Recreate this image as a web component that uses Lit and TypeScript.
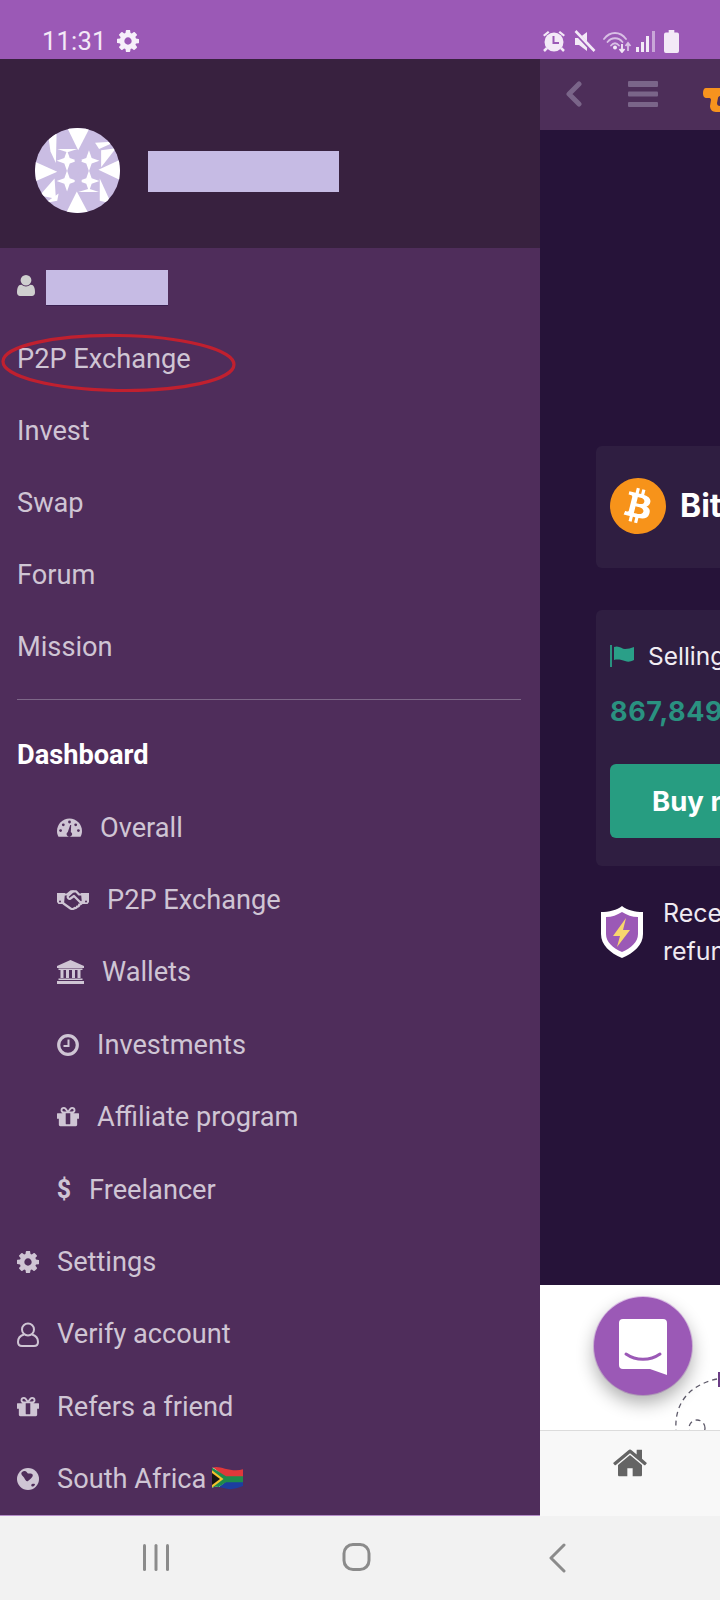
import { LitElement, html, css, svg } from "lit";
import { customElement } from "lit/decorators.js";

const FA = {
  cog: "M1152 896q0-106-75-181t-181-75-181 75-75 181 75 181 181 75 181-75 75-181zm512-109v222q0 12-8 23t-20 13l-185 28q-19 54-39 91 35 50 107 138 10 12 10 25t-9 23q-27 37-99 108t-94 71q-12 0-26-9l-138-108q-44 23-91 38-16 136-29 186-7 28-36 28h-222q-14 0-24.5-8.5t-11.5-21.5l-28-184q-49-16-90-37l-141 107q-10 9-25 9-14 0-25-11-126-114-165-168-7-10-7-23 0-12 8-23 15-21 51-66.5t54-70.5q-27-50-41-99l-183-27q-13-2-21-12.5t-8-23.5v-222q0-12 8-23t19-13l186-28q14-46 39-92-40-57-107-138-10-12-10-24 0-10 9-23 26-36 98.5-107.5t94.5-71.5q13 0 26 10l138 107q44-23 91-38 16-136 29-186 7-28 36-28h222q14 0 24.5 8.5t11.5 21.5l28 184q49 16 90 37l142-107q9-9 24-9 13 0 25 10 129 119 165 170 7 8 7 22 0 12-8 23-15 21-51 66.5t-54 70.5q26 50 41 98l183 28q13 2 21 12.5t8 23.5z",
  user: "M1536 1399q0 109-62.5 187t-150.5 78h-854q-88 0-150.5-78t-62.5-187q0-85 8.5-160.5t31.5-152 58.5-131 94-89 134.5-34.5q131 128 313 128t313-128q76 0 134.5 34.5t94 89 58.5 131 31.5 152 8.5 160.5zm-256-887q0 159-112.5 271.5t-271.5 112.5-271.5-112.5-112.5-271.5 112.5-271.5 271.5-112.5 271.5 112.5 112.5 271.5z",
  gift: "M1056 1356v-716h-320v716q0 25 18 38.5t46 13.5h192q28 0 46-13.5t18-38.5zm-456-844h195l-126-161q-26-31-69-31-40 0-68 28t-28 68 28 68 68 28zm688-96q0-40-28-68t-68-28q-43 0-69 31l-125 161h194q40 0 68-28t28-68zm376 256v320q0 14-9 23t-23 9h-96v416q0 40-28 68t-68 28h-1088q-40 0-68-28t-28-68v-416h-96q-14 0-23-9t-9-23v-320q0-14 9-23t23-9h440q-93 0-158.5-65.5t-65.5-158.5 65.5-158.5 158.5-65.5q107 0 168 77l128 165 128-165q61-77 168-77 93 0 158.5 65.5t65.5 158.5-65.5 158.5-158.5 65.5h440q14 0 23 9t9 23z",
  home: "M1472 992v480q0 26-19 45t-45 19h-384v-384h-256v384h-384q-26 0-45-19t-19-45v-480q0-1 .5-3t.5-3l575-474 575 474q1 2 1 6zm223-69l-62 74q-8 9-21 11h-3q-13 0-21-7l-692-577-692 577q-12 8-24 7-13-2-21-11l-62-74q-8-10-7-23.5t11-21.5l719-599q32-26 76-26t76 26l244 204v-195q0-14 9-23t23-9h192q14 0 23 9t9 23v408l219 182q10 8 11 21.5t-7 23.5z",
};

const fa = (d: string, cls: string) =>
  html`<svg class=${cls} viewBox="128 128 1536 1536"><path d=${d} fill="currentColor"></path></svg>`;

const gauge = html`<svg class="i i-gauge" viewBox="0 0 25 19">
  <path fill="currentColor" d="M12.5 0.5C5.6 0.5 0 6.1 0 13c0 2 .4 3.6 1.2 5.2.2.4.6.6 1 .6h20.6c.4 0 .8-.2 1-.6.8-1.6 1.2-3.2 1.2-5.2C25 6.1 19.4.5 12.5.5z"></path>
  <g fill="#4f2d5b">
    <circle cx="12.5" cy="4" r="1.4"></circle><circle cx="6.3" cy="6.8" r="1.4"></circle>
    <circle cx="3.6" cy="12.6" r="1.4"></circle><circle cx="21.4" cy="12.6" r="1.4"></circle>
    <circle cx="18.7" cy="6.8" r="1.4"></circle>
    <path d="M13.2 7l1-.1-.4 7.1a2.6 2.6 0 1 1-3 .1z"></path>
  </g>
</svg>`;

const hand = html`<svg class="i i-hand" viewBox="0 0 32 20">
  <g fill="currentColor">
    <path d="M0 3h8l-1 11H1.500L0 12zM24 3h8v9l-1.500 2H25z"></path>
  </g>
  <g fill="#4f2d5b"><circle cx="3" cy="11.500" r="1"></circle><circle cx="29" cy="11.500" r="1"></circle></g>
  <g fill="none" stroke="currentColor" stroke-width="2.200" stroke-linejoin="round" stroke-linecap="round">
    <path d="M7 4.500h3l4-3.200h5l3 3.200h3"></path>
    <path d="M16 1.500l-5 4.500c-1 1.500 1 3.500 2.500 2.500l3.500-2.500 7.500 7.500"></path>
    <path d="M6.500 13.500l7 5c1.500 1 3.500 .5 4-.5 1.200 .5 2.500-.3 2.500-1.500 1.200 .3 2.500-.7 2.200-2 1.200 .2 2.500-1 1.800-2.500"></path>
  </g>
</svg>`;

const bank = html`<svg class="i i-bank" viewBox="0 0 27 24" fill="currentColor">
  <path d="M13.500 0L27 6v2H0V6z"></path>
  <path d="M1.500 8.500h24v1.500h-24zM3.500 10h3v8h-3zM9 10h3v8H9zM15 10h3v8h-3zM20.500 10h3v8h-3zM1.500 18.500h24V20h-24zM0 21h27v3H0z"></path>
</svg>`;

const clock = html`<svg class="i i-clock" viewBox="0 0 22 22">
  <circle cx="11" cy="11" r="9.300" fill="none" stroke="currentColor" stroke-width="3.200"></circle>
  <path d="M11.500 5.500v6.500H6.500" fill="none" stroke="currentColor" stroke-width="2"></path>
</svg>`;

const userOutline = html`<svg class="i i-verify" viewBox="0 0 22 25" fill="none" stroke="currentColor" stroke-width="2">
  <circle cx="11" cy="7.500" r="6"></circle>
  <path d="M7 12.500C3.500 13.500 1 16 1 20c0 2.500 1.500 4 4 4h12c2.500 0 4-1.500 4-4 0-4-2.500-6.500-6-7.500"></path>
</svg>`;

const globe = html`<svg class="i i-top" viewBox="0 0 22 22">
  <circle cx="11" cy="11" r="11" fill="currentColor"></circle>
  <path fill="#4f2d5b" d="M5 4c2-1.500 4-1 5 .5s2 1 3.500 1 3 1 2 3-3 3-4.500 4.500-3-2-4-3.500S3 6 5 4zM15 16c1.500-.5 3-.5 3 .5s-2 2.500-3 2-1-2 0-2.500z"></path>
</svg>`;

const zaFlag = html`<svg class="flag" viewBox="0 0 31 22" preserveAspectRatio="none">
  <defs><clipPath id="zaf"><path d="M0 1C4-1 8 .5 13 1.500s12 2.500 18 .5v15.500c-6 2-11 3.500-16 2.500S4 17 0 19z"></path></clipPath></defs>
  <g clip-path="url(#zaf)">
    <rect width="31" height="11" fill="#e0383a"></rect>
    <rect y="11" width="31" height="11" fill="#1d3ea0"></rect>
    <path d="M-1-1l16 11.500h17v2H15L-1 24z" fill="#fff"></path>
    <path d="M-1 0l15 8.500h18v5.500H14L-1 23z" fill="#1f8a4c"></path>
    <path d="M0 3l11.500 8L0 19z" fill="#f4c02f"></path>
    <path d="M0 5.500l8 5.500-8 5.500z" fill="#141414"></path>
  </g>
</svg>`;

const star = (x: number, y: number) =>
  svg`<polygon points="${x},${y - 31} ${x + 8},${y - 8} ${x + 31},${y} ${x + 8},${y + 8} ${x},${y + 31} ${x - 8},${y + 8} ${x - 31},${y} ${x - 8},${y - 8}" fill="#fff"></polygon>`;

const avatar = html`<svg class="avatar" viewBox="0 0 252 252">
  <defs><clipPath id="av"><circle cx="126" cy="126" r="126"></circle></clipPath></defs>
  <g clip-path="url(#av)">
    <rect width="252" height="252" fill="#cabde3"></rect>
    <g fill="#fff">
      <polygon points="94,-4 164,-4 128,66"></polygon>
      <polygon points="-4,98 -4,160 66,130"></polygon>
      <polygon points="256,92 256,156 188,124"></polygon>
      <polygon points="90,256 160,256 124,188"></polygon>
      <polygon points="40,30 64,16 62,104 46,70"></polygon>
      <polygon points="178,44 240,40 190,62"></polygon>
      <polygon points="196,66 240,60 196,116"></polygon>
      <polygon points="14,200 58,150 62,210"></polygon>
      <polygon points="70,194 30,222 66,216"></polygon>
      <polygon points="192,150 226,224 192,216"></polygon>
      <polygon points="66,62 126,62 96,72"></polygon>
      <polygon points="128,190 190,190 160,180"></polygon>
    </g>
    ${star(95, 97)}${star(160, 97)}${star(95, 157)}${star(160, 157)}
    <polygon points="128,72 139,97 128,122 117,97" fill="#cabde3"></polygon>
    <polygon points="128,132 139,157 128,182 117,157" fill="#cabde3"></polygon>
  </g>
</svg>`;

const item = (icon: unknown, label: string, sub = true) => html`
  <div class=${sub ? "row sub" : "row top"}>${icon}<span>${label}</span></div>`;

@customElement("app-root")
export class AppRoot extends LitElement {
  static styles = css`
    :host { display: block; width: 720px; height: 1600px; font-family: Roboto, "Liberation Sans", sans-serif; overflow: hidden; background: #f2f2f2; }
    .page { display: flex; flex-direction: column; height: 1600px; }

    .status { height: 59px; flex: none; background: #9b59b6; color: #f3e9f7; display: flex; align-items: flex-start; box-sizing: border-box; padding: 27px 0 0 42px; }
    .time { font-size: 25.500px; line-height: 29px; letter-spacing: .2px; width: 75px; }
    .st-gear { width: 22px; height: 22px; margin-top: 3px; color: #f6effa; }
    .st-right { margin-left: auto; display: flex; align-items: flex-start; padding: 3px 41px 0 0; }
    .st-right svg { display: block; height: 23px; flex: none; }
    .m8 { margin-left: 8px; }
    .m7 { margin-left: 7px; }
    .m3 { margin-left: 3px; }

    .main { flex: 1; display: flex; min-height: 0; }
    .drawer { width: 540px; flex: none; background: #4f2d5b; display: flex; flex-direction: column; border-bottom: 1px solid #b48cc8; box-sizing: border-box; }
    .head { height: 189px; flex: none; background: #38213f; display: flex; align-items: center; padding: 36px 0 0 35px; box-sizing: border-box; gap: 28px; }
    .avatar { width: 85px; height: 85px; display: block; margin-top: -2px; }
    .name { width: 191px; height: 41px; background: #c6bbe4; }
    .list { flex: 1; padding-top: 3px; color: #cfc5d4; font-size: 27.200px; }
    .row { height: 72px; display: flex; align-items: center; padding-left: 17px; box-sizing: border-box; position: relative; white-space: nowrap; }
    .row.sub, .row.top, .row.dash { height: 72.400px; }
    .row.sub { padding-left: 57px; gap: 18px; }
    .row.top { gap: 18px; }
    .row.dash { font-weight: 700; color: #fff; }
    .row.me { gap: 11px; }
    .row.me svg { width: 18px; height: 21px; color: #cfcfcf; margin-top: -3px; }
    .block { width: 122px; height: 35px; background: #c6bbe4; box-shadow: 0 1px 0 #3a2050; }
    .oval { position: absolute; left: 1px; top: 9px; width: 235px; height: 60px; pointer-events: none; }
    .rule { height: 1px; background: #7d6788; margin: 16px 19px 19px 17px; }

    .i { display: block; flex: none; color: #cfc5d4; }
    .i-top { width: 22px; height: 22px; }
    .i-verify { width: 22px; height: 25px; }
    .i-gauge { width: 25px; height: 19px; }
    .i-hand { width: 32px; height: 20px; }
    .i-bank { width: 27px; height: 24px; }
    .i-clock { width: 22px; height: 22px; }
    .i-gift { width: 22px; height: 22px; }
    .dollar { width: 14px; font-size: 25px; font-weight: 700; line-height: 1; color: #cfc5d4; flex: none; display: flex; justify-content: center; }
    .flag { width: 31px; height: 24px; margin-left: -12px; display: block; flex: none; }

    .content { flex: 1; min-width: 0; overflow: hidden; display: flex; flex-direction: column; position: relative; }
    .topbar { height: 71px; flex: none; background: #4d2e59; display: flex; align-items: center; padding-left: 25px; box-sizing: border-box; }
    .topbar svg { flex: none; display: block; }
    .tb-back { width: 17px; height: 26px; margin-top: -1px; }
    .tb-menu { width: 30px; height: 26px; margin: -1px 0 0 46px; }
    .tb-logo { width: 30px; height: 24px; margin: 10px 0 0 45px; }
    .dark { height: 1155px; flex: none; background: #261339; padding: 316px 0 0 56px; box-sizing: border-box; width: 500px; }
    .card { width: 420px; background: #2f1e41; border-radius: 6px; box-sizing: border-box; }
    .coin-card { height: 122px; display: flex; align-items: flex-start; padding: 32px 0 0 14px; gap: 14px; }
    .coin { width: 56px; height: 56px; display: block; flex: none; }
    .coin-name { font: 700 32px/56px Inter, "Liberation Sans", sans-serif; color: #fff; }
    .sell-card { height: 256px; margin-top: 42px; padding: 32px 14px 0; display: flex; flex-direction: column; }
    .sell { display: flex; align-items: center; gap: 13px; font: 400 24.500px/28px Inter, "Liberation Sans", sans-serif; color: #f1edf3; white-space: nowrap; }
    .sell svg { width: 25px; height: 22px; flex: none; }
    .amount { font: 700 27px/32px Inter, "Liberation Sans", sans-serif; letter-spacing: .6px; color: #2a9180; margin-top: 26px; }
    .buy { margin-top: 36px; height: 74px; background: #279d81; border-radius: 6px; color: #fff; font: 700 27.500px/74px Inter, "Liberation Sans", sans-serif; padding-left: 42px; }
    .refund { display: flex; gap: 20px; margin: 28px 0 0 5px; width: 420px; color: #efeaf1; font: 400 25px/38px Inter, "Liberation Sans", sans-serif; }
    .refund svg { width: 42px; height: 52px; flex: none; margin-top: 12px; }

    .white { height: 145px; flex: none; background: #fff; position: relative; overflow: hidden; }
    .deco { position: absolute; left: 130px; top: 80px; width: 50px; height: 65px; }
    .tab { flex: 1; background: #f8f8f8; border-top: 1px solid #dcdcdc; box-sizing: border-box; padding: 16px 0 0 72px; }
    .tab svg { width: 36px; height: 32px; display: block; color: #646464; }
    .fab { position: absolute; left: 54px; top: 1238px; width: 98px; height: 98px; border-radius: 50%; background: #9b59b6; box-shadow: 0 8px 18px rgba(0,0,0,.32), 0 0 0 1px #e7c9f2; display: flex; align-items: center; justify-content: center; }
    .fab svg { width: 50px; height: 58px; display: block; margin-top: 2px; }

    .nav { height: 84px; flex: none; background: #f2f2f2; position: relative; display: flex; align-items: flex-start; padding-top: 27px; box-sizing: border-box; }
    .nav svg { display: block; height: 30px; flex: none; }
    .nav-bars { width: 32px; margin-left: 138px; }
    .nav-home { width: 30px; margin-left: 172px; }
    .nav-back { width: 20px; margin-left: 176px; }
  `;

  render() {
    return html`<div class="page">
      <div class="status">
        <div class="time">11:31</div>
        ${fa(FA.cog, "st-gear")}
        <div class="st-right">
          <svg width="24" viewBox="0 0 24 23" fill="#f3e9f7">
            <path d="M1 5l5-4 1.500 1.500-5 4zM23 5l-5-4-1.500 1.500 5 4z"></path>
            <circle cx="12" cy="12" r="9.500"></circle>
            <path d="M11.500 6v7h5.500" fill="none" stroke="#9b59b6" stroke-width="2"></path>
            <path d="M5 18l-3 3M19 18l3 3" stroke="#f3e9f7" stroke-width="2.500"></path>
          </svg>
          <svg width="22" viewBox="0 0 22 23" class="m8" fill="#f3e9f7">
            <path d="M1 8h4l8-6v19l-8-6H1z"></path>
            <path d="M1 2l19 20" stroke="#9b59b6" stroke-width="4"></path>
            <path d="M1.500 1l19 20" stroke="#f3e9f7" stroke-width="2.600"></path>
          </svg>
          <svg width="30" viewBox="0 0 30 23" class="m7" fill="none" stroke="#d9bfe5" stroke-width="1.800">
            <path d="M1 9c6-8 16-8 22 0M4.500 12c4-5 11-5 15 0M8 15.500c2.500-3 5.500-3 8 0" stroke-linecap="round"></path>
            <circle cx="12" cy="17.500" r="2" fill="#f3e9f7" stroke="none"></circle>
            <path d="M19 14v7M16.500 19l2.500 3 2.500-3" stroke="#f3e9f7"></path>
            <path d="M25 21v-7M22.500 16l2.500-3 2.500 3"></path>
          </svg>
          <svg width="20" viewBox="0 0 20 23" class="m3">
            <rect x="0" y="17" width="3" height="5" fill="#f3e9f7"></rect>
            <rect x="5" y="12" width="3" height="10" fill="#f3e9f7"></rect>
            <rect x="10" y="6" width="3" height="16" fill="#f3e9f7"></rect>
            <rect x="16" y="1" width="3" height="21" fill="#c9a6d8"></rect>
          </svg>
          <svg width="15" viewBox="0 0 16 23" class="m8" fill="#f3e9f7" preserveAspectRatio="none">
            <path d="M5 0h6v2.500h3a2 2 0 0 1 2 2V21a2 2 0 0 1-2 2H2a2 2 0 0 1-2-2V4.500a2 2 0 0 1 2-2h3z"></path>
          </svg>
        </div>
      </div>

      <div class="main">
        <div class="drawer">
          <div class="head">${avatar}<div class="name"></div></div>
          <div class="list">
            <div class="row me">
              <svg viewBox="256 128 1280 1536" preserveAspectRatio="none"><path d=${FA.user} fill="currentColor"></path></svg>
              <div class="block"></div>
            </div>
            <div class="row">
              <span>P2P Exchange</span>
              <svg class="oval" viewBox="0 0 235 60" fill="none">
                <ellipse cx="117.500" cy="31" rx="115.500" ry="27.500" stroke="#c0202f" stroke-width="3.200" transform="rotate(.8 117 30)"></ellipse>
              </svg>
            </div>
            <div class="row"><span>Invest</span></div>
            <div class="row"><span>Swap</span></div>
            <div class="row"><span>Forum</span></div>
            <div class="row"><span>Mission</span></div>
            <div class="rule"></div>
            <div class="row dash"><span>Dashboard</span></div>
            ${item(gauge, "Overall")}
            ${item(hand, "P2P Exchange")}
            ${item(bank, "Wallets")}
            ${item(clock, "Investments")}
            ${item(fa(FA.gift, "i i-gift"), "Affiliate program")}
            ${item(html`<span class="dollar">$</span>`, "Freelancer")}
            ${item(fa(FA.cog, "i i-top"), "Settings", false)}
            ${item(userOutline, "Verify account", false)}
            ${item(fa(FA.gift, "i i-top"), "Refers a friend", false)}
            <div class="row top">${globe}<span>South Africa</span>${zaFlag}</div>
          </div>
        </div>

        <div class="content">
          <div class="topbar">
            <svg class="tb-back" viewBox="0 0 17 26" fill="none" stroke="#7a6589" stroke-width="5" stroke-linecap="round" stroke-linejoin="round"><path d="M14 3L4 13l10 10"></path></svg>
            <svg class="tb-menu" viewBox="0 0 30 26" fill="#7a6589"><rect width="30" height="6" y="0" rx="1"></rect><rect width="30" height="5" y="10.500" rx="1"></rect><rect width="30" height="5" y="21" rx="1"></rect></svg>
            <svg class="tb-logo" viewBox="0 0 30 24" fill="#f7931e"><path d="M3 0h27v8H17c-1 0-2 1-2 2l-1 5c0 2 1 3 3 3h13v6H13c-4 0-6-3-6-6l1-6c0-1-.5-2-1.500-2H4C1 10 0 8 0 5s1-5 3-5z"></path></svg>
          </div>
          <div class="dark">
            <div class="card coin-card">
              <svg class="coin" viewBox="0 0 64 64">
                <path fill="#f7931a" d="M63.040 39.741c-4.274 17.143-21.638 27.575-38.783 23.301C7.120 58.768-3.313 41.404.962 24.262 5.234 7.117 22.597-3.317 39.737.957c17.144 4.274 27.576 21.640 23.302 38.784z"></path>
                <path fill="#fff" d="M46.110 27.441c.636-4.258-2.606-6.547-7.039-8.074l1.438-5.768-3.512-.875-1.400 5.616c-.922-.230-1.870-.447-2.812-.662l1.410-5.653-3.509-.875-1.439 5.766c-.764-.174-1.514-.346-2.242-.527l.004-.018-4.842-1.209-.934 3.750s2.605.597 2.550.634c1.422.355 1.680 1.296 1.636 2.042l-1.638 6.571c.098.025.225.061.365.117l-.370-.092-2.297 9.205c-.174.432-.615 1.080-1.609.834.035.051-2.552-.637-2.552-.637l-1.743 4.020 4.570 1.139c.850.213 1.683.436 2.502.646l-1.453 5.835 3.507.875 1.440-5.772c.957.260 1.887.500 2.797.726L27.504 50.800l3.511.875 1.453-5.823c5.987 1.133 10.490.676 12.383-4.738 1.527-4.360-.075-6.875-3.225-8.516 2.294-.531 4.022-2.040 4.483-5.157zM38.087 38.690c-1.086 4.360-8.426 2.004-10.807 1.412l1.928-7.729c2.380.594 10.011 1.770 8.880 6.317zm1.085-11.312c-.990 3.966-7.100 1.951-9.083 1.457l1.748-7.010c1.983.494 8.367 1.416 7.335 5.553z"></path>
              </svg>
              <div class="coin-name">Bitcoin</div>
            </div>
            <div class="card sell-card">
              <div class="sell">
                <svg viewBox="0 0 25 22"><rect x="0" y="0" width="2" height="22" fill="#2a9180"></rect><path d="M4 2c5-2 8 2 11 2s6-1 9-2v13c-4 2-6 2-9 1s-7-2-11-1z" fill="#2a9f88"></path></svg>
                <span>Selling price</span>
              </div>
              <div class="amount">867,849.00</div>
              <div class="buy">Buy now</div>
            </div>
            <div class="refund">
              <svg viewBox="0 0 42 52">
                <path fill="#fff" d="M21 0c5 4 13 6 21 6v22c0 11-9 19-21 24C9 47 0 39 0 28V6c8 0 16-2 21-6z"></path>
                <path fill="#9b59b6" d="M21 6c5 3 10 5 16 5v17c0 8-7 14-16 18-9-4-16-10-16-18V11c6 0 11-2 16-5z"></path>
                <path fill="#f8d66d" d="M25 12L12 30h7l-3 11 13-17h-7z"></path>
              </svg>
              <div>Receive a full<br />refund</div>
            </div>
          </div>
          <div class="white">
            <svg class="deco" viewBox="0 0 50 65" fill="none" stroke="#5e5a6a" stroke-width="1.300" stroke-dasharray="5 4">
              <path d="M47 14C24 19 4 34 6 65"></path>
              <circle cx="27" cy="63" r="8"></circle>
              <rect x="48" y="7" width="4" height="15" fill="#6b3d86" stroke="none"></rect>
            </svg>
          </div>
          <div class="tab">${fa(FA.home, "")}</div>
          <div class="fab">
            <svg viewBox="0 0 50 58">
              <path fill="#fff" d="M5 1h40a4 4 0 0 1 4 4v52L32 51H5a4 4 0 0 1-4-4V5a4 4 0 0 1 4-4z"></path>
              <path d="M8 36c10 7 24 7 34 0" fill="none" stroke="#9b59b6" stroke-width="3" stroke-linecap="round"></path>
            </svg>
          </div>
        </div>
      </div>

      <div class="nav">
        <svg class="nav-bars" viewBox="0 0 32 30" fill="#8b8b8b"><rect x="5" y="1" width="3" height="27" rx="1.500"></rect><rect x="16.500" y="1" width="3" height="27" rx="1.500"></rect><rect x="28" y="1" width="3" height="27" rx="1.500"></rect></svg>
        <svg class="nav-home" viewBox="0 0 30 30" fill="none" stroke="#8b8b8b" stroke-width="3"><rect x="2" y="1.500" width="25" height="25" rx="9"></rect></svg>
        <svg class="nav-back" viewBox="0 0 20 30" fill="none" stroke="#8b8b8b" stroke-width="3" stroke-linecap="round" stroke-linejoin="round"><path d="M16 2L3 15l13 13"></path></svg>
      </div>
    </div>`;
  }
}
